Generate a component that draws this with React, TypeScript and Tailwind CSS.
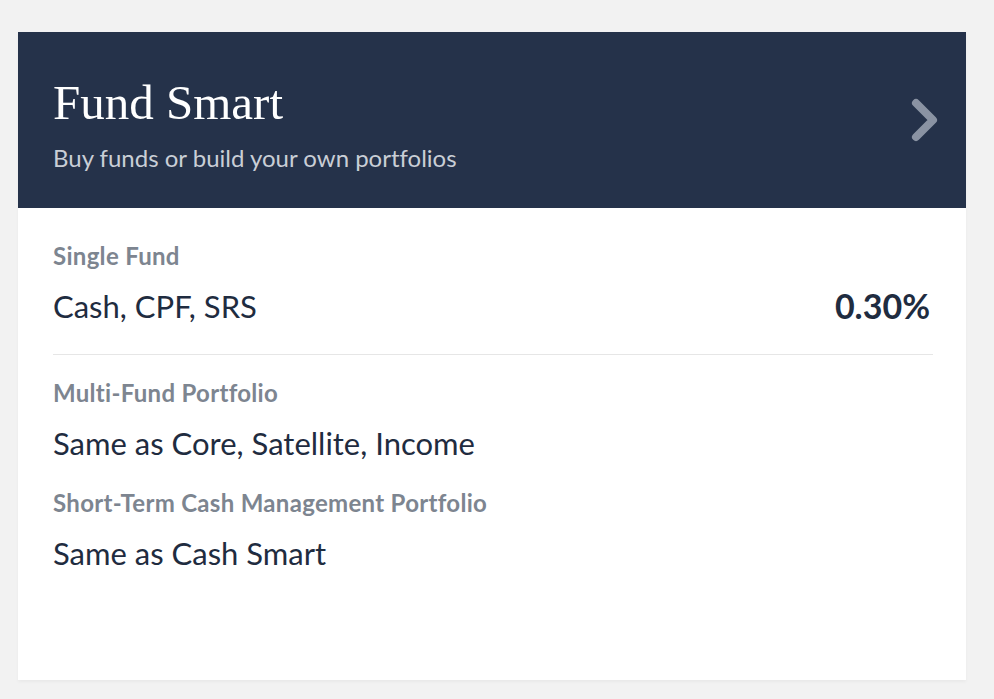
export default function App() {
  const lato = { fontFamily: 'Lato, "Noto Sans", sans-serif' }
  return (
    <div className="min-h-[699px] bg-[#f2f2f2] pt-[32px] px-[18px] [font-variant-ligatures:none]" style={lato}>
      <div className="w-[948px] bg-white shadow-[0_2px_3px_rgba(0,0,0,0.04)]">
        {/* Header */}
        <div className="h-[176px] bg-[#25324a] flex items-start justify-between pl-[35px] pr-[20px] pt-[46px]">
          <div className="flex flex-col">
            <h1
              className="text-[49px] leading-none text-white"
              style={{ fontFamily: '"Liberation Serif", "DejaVu Serif", serif' }}
            >
              Fund Smart
            </h1>
            <p className="text-[24px] text-[#c9ced6] mt-[19px] leading-none">Buy funds or build your own portfolios</p>
          </div>
          <svg width="40" height="48" viewBox="0 0 40 48" className="mt-[18px]">
            <path d="M10 7 L27 24 L10 41" fill="none" stroke="#8a93a3" strokeWidth="8" strokeLinecap="round" strokeLinejoin="round" />
          </svg>
        </div>

        {/* Body */}
        <div className="h-[472px] pl-[35px] pr-[33px] pt-[36px]">
          <div className="text-[24px] font-bold text-[#7d8590] leading-none tracking-[0.3px]">Single Fund</div>
          <div className="h-[34px] flex items-center justify-between mt-[21px]">
            <span className="text-[31px] text-[#1f2c40] leading-none">Cash, CPF, SRS</span>
            <span className="text-[34px] font-bold text-[#1f2c40] leading-none mr-[3px]">0.30%</span>
          </div>
          <div className="h-px bg-[#e6e6e6] mt-[31px]" />
          <div className="text-[24px] font-bold text-[#7d8590] leading-none tracking-[0.3px] mt-[26px]">Multi-Fund Portfolio</div>
          <div className="text-[31px] text-[#1f2c40] leading-none mt-[23px]">Same as Core, Satellite, Income</div>
          <div className="text-[24px] font-bold text-[#7d8590] leading-none tracking-[0.3px] mt-[32px]">Short-Term Cash Management Portfolio</div>
          <div className="text-[31px] text-[#1f2c40] leading-none mt-[23px]">Same as Cash Smart</div>
        </div>
      </div>
    </div>
  )
}
